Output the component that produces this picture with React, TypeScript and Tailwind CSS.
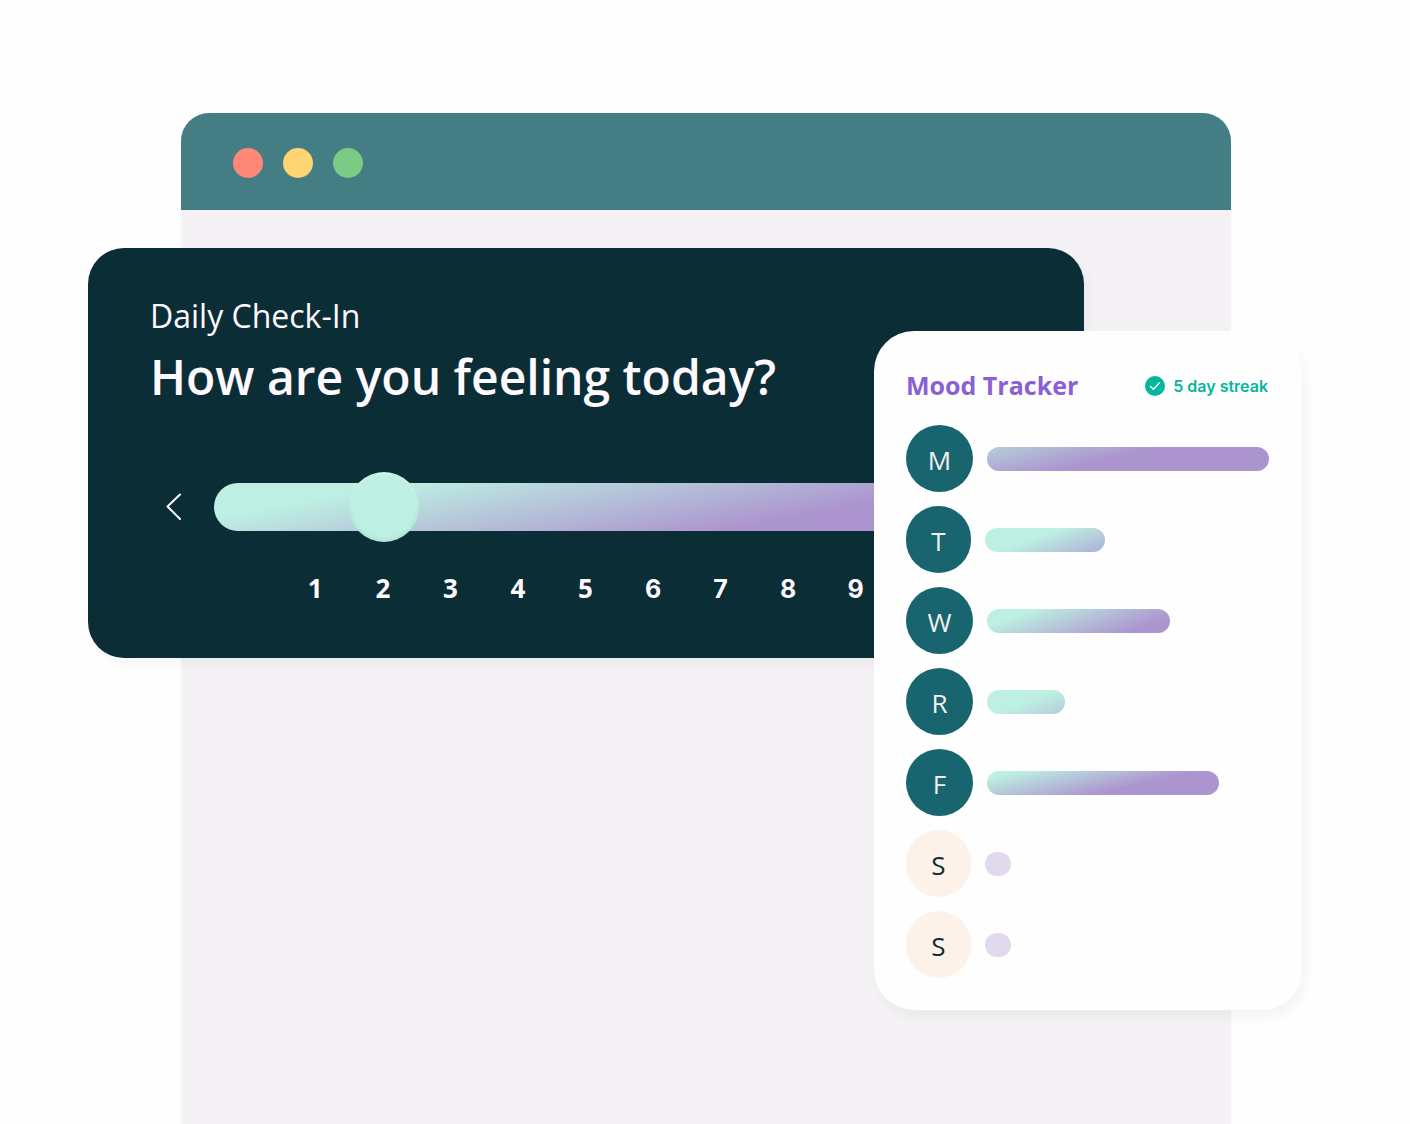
import { useState } from "react";

type Day = {
  letter: string;
  name: string;
  badge: string;
  bar: string;
};

const LOGGED = "bg-[#18646f] text-[#f4f0ee]";
const EMPTY = "bg-[#fcf2ea] text-[#0b2d35]";

const DAYS: Day[] = [
  { letter: "M", name: "Monday", badge: `w-[67px] ${LOGGED}`, bar: "w-[282px] bg-[linear-gradient(167deg,#b5cad9_3px,#ac95cf_38px)]" },
  { letter: "T", name: "Tuesday", badge: `w-[65px] ${LOGGED}`, bar: "w-[120px] bg-[linear-gradient(160deg,#bdf0e2_26px,#afb4d8_60px)]" },
  { letter: "W", name: "Wednesday", badge: `w-[67px] ${LOGGED}`, bar: "w-[183px] bg-[linear-gradient(160deg,#bdf0e2_16px,#ac95cf_70px)]" },
  { letter: "R", name: "Thursday", badge: `w-[67px] ${LOGGED}`, bar: "w-[78px] bg-[linear-gradient(160deg,#bdf0e2_24px,#b6cfdc_46px)]" },
  { letter: "F", name: "Friday", badge: `w-[67px] ${LOGGED}`, bar: "w-[232px] bg-[linear-gradient(167deg,#bdf0e2_7px,#ac95cf_47px)]" },
  { letter: "S", name: "Saturday", badge: `w-[65px] ${EMPTY}`, bar: "w-[26px] bg-[#e0daec]" },
  { letter: "S", name: "Sunday", badge: `w-[65px] ${EMPTY}`, bar: "w-[26px] bg-[#e0daec]" },
];

const LEVELS = [1, 2, 3, 4, 5, 6, 7, 8, 9];

function BrowserWindow() {
  return (
    <div className="flex flex-1 flex-col overflow-hidden rounded-t-[28px] bg-[#f4f2f5]">
      <div className="flex h-[97px] items-center gap-5 bg-[#447d84] px-[52px] pt-0.5">
        <span className="size-[30px] rounded-full bg-[#ff8877]" />
        <span className="size-[30px] rounded-full bg-[#ffd472]" />
        <span className="size-[30px] rounded-full bg-[#7bcb85]" />
      </div>
    </div>
  );
}

function CheckIn() {
  const [mood, setMood] = useState(2);

  return (
    <section className="absolute top-[248px] right-[326px] left-[88px] rounded-[36px] bg-[#0b2d35] px-[62px] pt-12 pb-[50px] text-[#fdf9ff] shadow-[4px_6px_12px_rgba(40,20,60,0.04)]">
      <p className="text-[32px] leading-10">Daily Check-In</p>
      <label htmlFor="mood" className="block text-[48px] leading-[82px] font-semibold whitespace-nowrap">
        How are you feeling today?
      </label>
      <div className="mt-[54px] flex items-center">
        <button
          type="button"
          aria-label="Lower"
          onClick={() => setMood(Math.max(0, mood - 1))}
          className="mr-8 ml-4 cursor-pointer"
        >
          <svg className="h-7 w-4" viewBox="0 0 16 28" fill="none" stroke="currentColor" strokeWidth={2}>
            <path strokeLinecap="round" strokeLinejoin="round" d="M14 1.500L1.500 13.500L14 26" />
          </svg>
        </button>
        <input
          id="mood"
          type="range"
          min={0}
          max={10}
          value={mood}
          onChange={(e) => setMood(Number(e.target.value))}
          className="h-[70px] w-[743px] shrink-0 cursor-pointer appearance-none bg-transparent [&::-webkit-slider-runnable-track]:h-12 [&::-webkit-slider-runnable-track]:rounded-full [&::-webkit-slider-runnable-track]:bg-[linear-gradient(169deg,#bdf0e2_18%,#ac95cf_76%)] [&::-webkit-slider-thumb]:-mt-[11px] [&::-webkit-slider-thumb]:size-[70px] [&::-webkit-slider-thumb]:appearance-none [&::-webkit-slider-thumb]:rounded-full [&::-webkit-slider-thumb]:bg-[#bdf0e2] [&::-webkit-slider-thumb]:shadow-[inset_0_3px_3px_rgba(255,255,255,0.25),inset_0_-2px_4px_rgba(60,120,110,0.12)]"
        />
      </div>
      <ol className="mt-[26px] ml-16 grid w-[743px] grid-cols-11 items-baseline text-center text-[26px] leading-10 font-bold">
        {LEVELS.map((level) => (
          <li key={level} className={level === 1 ? "col-start-2" : level > 5 ? "font-['Inter',sans-serif] text-[25px] leading-9" : ""}>
            {level}
          </li>
        ))}
      </ol>
    </section>
  );
}

function MoodTracker() {
  return (
    <section className="absolute top-[331px] right-[108px] w-[428px] rounded-[40px] bg-[#fefefe] p-8 shadow-[4px_8px_12px_rgba(40,20,60,0.04)]">
      <header className="flex h-[46px] items-center justify-between pr-0.5">
        <h2 className="text-[25px] font-bold text-[#8c5fd3]">Mood Tracker</h2>
        <p className="flex items-center gap-2 font-['Inter',sans-serif] text-base font-semibold text-[#05b59c]">
          <svg className="size-5" viewBox="0 0 20 20" fill="none">
            <circle cx="10" cy="10" r="10" fill="currentColor" />
            <path d="M5.500 10.500L8.500 13.300L14.500 6.800" stroke="#fff" strokeWidth={1.4} strokeLinecap="round" strokeLinejoin="round" />
          </svg>
          5 day streak
        </p>
      </header>
      <ul className="mt-4 flex flex-col gap-3.5">
        {DAYS.map((day) => (
          <li key={day.name} className="flex items-center gap-3.5">
            <span className={`flex h-[67px] items-center justify-center rounded-full pt-1 text-[26px] ${day.badge}`}>
              {day.letter}
            </span>
            <span className={`h-6 rounded-full ${day.bar}`} />
          </li>
        ))}
      </ul>
    </section>
  );
}

export default function App() {
  return (
    <main className="relative flex min-h-screen flex-col overflow-hidden bg-[#fefefe] pt-[113px] pr-[179px] pl-[181px] font-['Open_Sans','Noto_Sans',sans-serif]">
      <BrowserWindow />
      <CheckIn />
      <MoodTracker />
    </main>
  );
}
